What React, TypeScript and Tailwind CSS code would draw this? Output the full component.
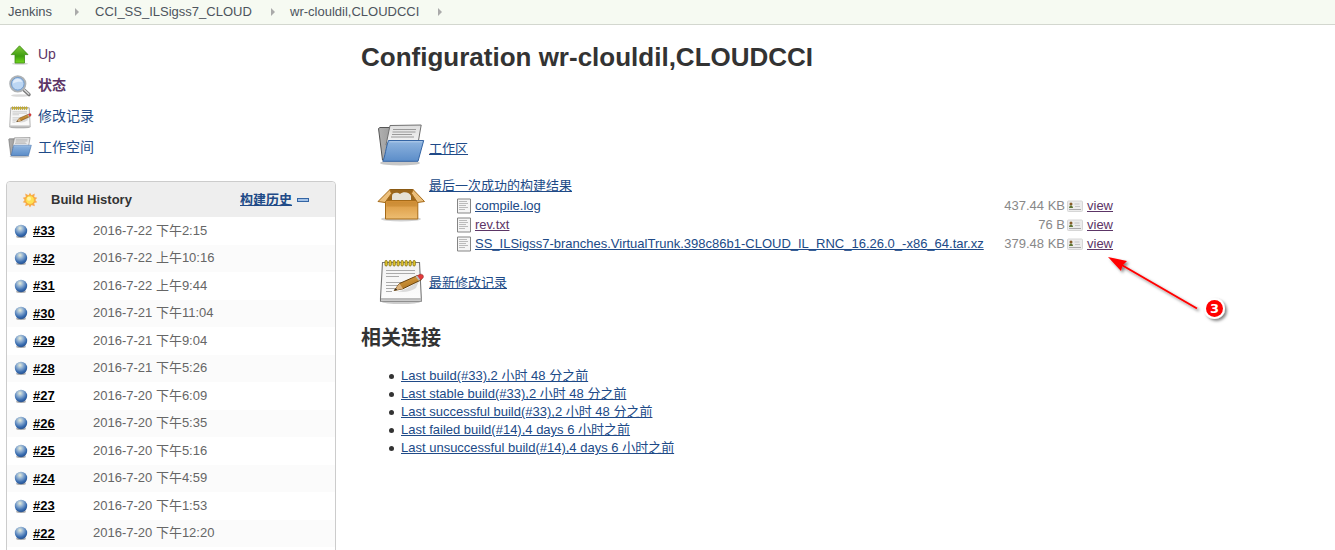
import React from "react";

const UpIcon = () => (
  <svg width="24" height="24" viewBox="0 0 24 24">
    <defs>
      <linearGradient id="up" x1="0" y1="0" x2="0" y2="1">
        <stop offset="0" stopColor="#7fc83a" />
        <stop offset=".6" stopColor="#3f9e10" />
        <stop offset="1" stopColor="#72d81e" />
      </linearGradient>
    </defs>
    <ellipse cx="12" cy="20.8" rx="8" ry="1" fill="#000" opacity=".18" />
    <path d="M11.5 2.8 20 11.6h-3.5v8.4h-9.500v-8.4H3.200z" fill="url(#up)" stroke="#3c8a12" strokeWidth=".8" />
  </svg>
);

const SearchIcon = () => (
  <svg width="24" height="24" viewBox="0 0 24 24">
    <ellipse cx="12" cy="21.500" rx="9" ry="1.300" fill="#000" opacity=".15" />
    <path d="M15.500 15.500 21 20.600" stroke="#777" strokeWidth="3.400" strokeLinecap="round" />
    <path d="M16 15.600 20.800 20.100" stroke="#d8d8d8" strokeWidth="1.400" strokeLinecap="round" />
    <circle cx="9.800" cy="9.800" r="7.600" fill="#bcd6f3" stroke="#aeb2b5" strokeWidth="2" />
    <circle cx="9.800" cy="9.800" r="6.300" fill="none" stroke="#5a8ac4" strokeWidth=".8" />
    <path d="M5 9.500c0-6 8-6 9.200-1.500C11 7.500 8 8 5 9.500z" fill="#fff" opacity=".55" />
  </svg>
);

const NotepadIcon = ({ size }: { size: number }) => (
  <svg width={size} height={size} viewBox="0 0 48 48" className="shrink-0">
    <defs>
      <linearGradient id="paper" x1="0" y1="0" x2="0" y2="1">
        <stop offset="0" stopColor="#f2f2f2" />
        <stop offset="1" stopColor="#fcfcfc" />
      </linearGradient>
      <linearGradient id="pencil" x1="0" y1="0" x2=".5" y2="1">
        <stop offset="0" stopColor="#e9ad4e" />
        <stop offset="1" stopColor="#a8701d" />
      </linearGradient>
    </defs>
    <ellipse cx="24" cy="45" rx="19" ry="2" fill="#000" opacity=".2" />
    <path d="M5.500 5.500h37l1.800 35.500v3.200H3.500V41z" fill="url(#paper)" stroke="#777" strokeWidth="1.100" />
    <path d="M4 41h40.200v2.600H4z" fill="#bbb" />
    <path d="M9 13.500h29M9 16.500h29M9 19.500h13M9 25.500h20M9 28.500h18M9 31.500h10M9 34.500h6" stroke="#aaa" />
    <g fill="#f1d32c" stroke="#85731b" strokeWidth=".9">
      {[8, 12, 16, 20, 24, 28, 32, 36].map((x) => (
        <rect key={x} x={x} y="3.500" width="2.300" height="5.500" rx="1.100" />
      ))}
    </g>
    <path d="M19 34c5 1 12-3 23-10l-3 7c-6 4-13 5-20 3z" fill="#000" opacity=".12" />
    <path d="m17.200 33.500 5.300-7 18-8 3.800 4.300-18.500 9z" fill="url(#pencil)" stroke="#68420c" />
    <path d="m17.200 33.500 5.300-7 3.500 5.300z" fill="#dcb27c" />
    <path d="m17.200 33.500 1.700-2.300 1.300 1.500z" fill="#222" />
    <path d="m39.500 19 3.800-1.700c3-.6 4.200 3 1.800 4.500L43 23z" fill="#e33a3a" stroke="#8d2b2b" strokeWidth=".6" />
    <path d="m38.500 19.400 1.700-.8 3.200 4.400-1.700.8z" fill="#bbb" />
  </svg>
);

const FolderIcon = ({ size }: { size: number }) => (
  <svg width={size} height={size} viewBox="0 0 48 48" className="shrink-0">
    <defs>
      <linearGradient id="front" x1="0" y1="0" x2="0" y2="1">
        <stop offset="0" stopColor="#90b5df" />
        <stop offset="1" stopColor="#5b8dc9" />
      </linearGradient>
      <linearGradient id="back" x1="0" y1="0" x2="1" y2="0">
        <stop offset="0" stopColor="#b0b0b0" />
        <stop offset="1" stopColor="#777" />
      </linearGradient>
      <linearGradient id="sheet" x1="0" y1="0" x2="0" y2="1">
        <stop offset="0" stopColor="#dedede" />
        <stop offset="1" stopColor="#f6f6f6" />
      </linearGradient>
    </defs>
    <ellipse cx="23" cy="41" rx="20" ry="2.500" fill="#000" opacity=".22" />
    <path d="M1.500 6.500 3 5.500h10l3 3h22L36 38H5.500z" fill="url(#back)" stroke="#555" />
    <path d="m13 3.500 31.200-.5-3.500 20H9z" fill="url(#sheet)" stroke="#707070" />
    <path d="M16 7.500h23M15.500 10h23M15 12.500h20M14 15h23" stroke="#9a9a9a" />
    <path d="M11.500 18.500h35.200L41 39.300H5.800C8 35 9 25 11.500 18.500z" fill="url(#front)" stroke="#3565a4" />
    <path d="M12.500 19.800h32.700" stroke="#c0d6f0" opacity=".7" />
  </svg>
);

const BoxIcon = () => (
  <svg width="48" height="48" viewBox="0 0 48 48" className="shrink-0">
    <defs>
      <linearGradient id="box" x1="0" y1="0" x2="0" y2="1">
        <stop offset="0" stopColor="#d9953a" />
        <stop offset="1" stopColor="#edbd72" />
      </linearGradient>
    </defs>
    <ellipse cx="24" cy="40" rx="20" ry="2.500" fill="#000" opacity=".18" />
    <path d="M13 10.500h23l5 11.500H8z" fill="#9a661d" stroke="#8a5a14" />
    <path d="M15 17c0-4 6-4 8-2 3-3 10-2 11 2v4H15z" fill="#e6e2d8" />
    <path d="M8.500 21.500h32.300v18.500H8.500z" fill="url(#box)" stroke="#a56a18" />
    <path d="M9.500 22.500h30.300v5H9.500z" fill="#b97a26" opacity=".4" />
    <path d="m13 10.500-12 12 7 1 6.500-9z" fill="#ecbf7b" stroke="#a56a18" />
    <path d="m36 10.500 11.500 12-7 1-6-9z" fill="#ecbf7b" stroke="#a56a18" />
  </svg>
);

const SunIcon = () => (
  <svg width="16" height="16" viewBox="0 0 16 16">
    <path d="m8 .8 1.500 2.500 3.300-1.700-.6 3.300 3 .8L13.300 8l1.900 2.300-3 .8.600 3.200-3.300-1.400L8 15.500l-1.500-2.600-3.300 1.400.6-3.200-3-.8L2.700 8 .8 5.700l3-.8-.6-3.300 3.300 1.700z" fill="#f9a94b" />
    <circle cx="8" cy="8" r="4.400" fill="#ffe254" stroke="#f3b33c" strokeWidth=".8" />
    <circle cx="7" cy="6.800" r="2" fill="#fff5a8" />
  </svg>
);

const Ball = () => (
  <svg width="16" height="16" viewBox="0 0 16 16" className="shrink-0">
    <defs>
      <radialGradient id="ball" cx=".42" cy=".28" r=".7">
        <stop offset="0" stopColor="#e8edda" />
        <stop offset=".4" stopColor="#8aabd0" />
        <stop offset=".8" stopColor="#3569ad" />
        <stop offset="1" stopColor="#2c5694" />
      </radialGradient>
    </defs>
    <ellipse cx="8" cy="13.800" rx="5" ry="1.200" fill="#000" opacity=".3" />
    <circle cx="8" cy="8" r="6.200" fill="url(#ball)" />
  </svg>
);

const FileIcon = () => (
  <svg width="16" height="16" viewBox="0 0 16 16" className="shrink-0">
    <path d="M1.500 1h13v14h-13z" fill="#f5f5f5" stroke="#858585" />
    <path d="M3 3.500h8M3 5.500h9M3 7.500h7M3 9.500h9M3 11.500h6" stroke="#bbb" />
  </svg>
);

const CardIcon = () => (
  <svg width="16" height="16" viewBox="0 0 16 16" className="shrink-0">
    <rect x=".5" y="3" width="15" height="10.500" rx="1" fill="#ececec" stroke="#d6d6d6" />
    <circle cx="4" cy="6" r="1.500" fill="#865c28" />
    <path d="M2 10c0-3.500 4-3.500 4 0z" fill="#5f7634" />
    <path d="M7.500 6h5M8 8.500h5" stroke="#c5c5c5" />
    <path d="M2 11.500h12" stroke="#aaa" />
  </svg>
);

const Crumb = ({ text, className }: { text: string; className: string }) => (
  <span className={`flex items-center ${className}`}>
    <span className="grow">{text}</span>
    <svg width="4" height="8" viewBox="0 0 4 8">
      <path d="M0 0 4 4 0 8z" fill="#aaa" />
    </svg>
  </span>
);

const tasks = [
  { icon: <UpIcon />, text: "Up", style: "text-[#5c3566]" },
  { icon: <SearchIcon />, text: "状态", style: "text-[#5c3566] font-bold" },
  { icon: <NotepadIcon size={24} />, text: "修改记录", style: "text-[#204a87]" },
  { icon: <FolderIcon size={24} />, text: "工作空间", style: "text-[#204a87]" },
];

const builds = [
  ["#33", "2016-7-22 下午2:15"],
  ["#32", "2016-7-22 上午10:16"],
  ["#31", "2016-7-22 上午9:44"],
  ["#30", "2016-7-21 下午11:04"],
  ["#29", "2016-7-21 下午9:04"],
  ["#28", "2016-7-21 下午5:26"],
  ["#27", "2016-7-20 下午6:09"],
  ["#26", "2016-7-20 下午5:35"],
  ["#25", "2016-7-20 下午5:16"],
  ["#24", "2016-7-20 下午4:59"],
  ["#23", "2016-7-20 下午1:53"],
  ["#22", "2016-7-20 下午12:20"],
];

const files = [
  { name: "compile.log", size: "437.44 KB", style: "text-[#204a87]" },
  { name: "rev.txt", size: "76 B", style: "text-[#5c3566]" },
  { name: "SS_ILSigss7-branches.VirtualTrunk.398c86b1-CLOUD_IL_RNC_16.26.0_-x86_64.tar.xz", size: "379.48 KB", style: "text-[#204a87]" },
];

const links = [
  "Last build(#33),2 小时 48 分之前",
  "Last stable build(#33),2 小时 48 分之前",
  "Last successful build(#33),2 小时 48 分之前",
  "Last failed build(#14),4 days 6 小时之前",
  "Last unsuccessful build(#14),4 days 6 小时之前",
];

export default function App() {
  return (
    <div className="relative flex h-[550px] w-[1335px] flex-col overflow-hidden bg-white font-['Liberation_Sans','Noto_Sans_CJK_SC',sans-serif] text-[13px] text-[#333]">
      <header className="flex h-[25px] shrink-0 items-center border-b border-[#d3d7cf] bg-[#f6faf2] pl-2 text-[#4d545d]">
        <Crumb text="Jenkins" className="w-[71px]" />
        <Crumb text="CCI_SS_ILSigss7_CLOUD" className="ml-4 w-[180px]" />
        <Crumb text="wr-clouldil,CLOUDCCI" className="ml-[15px] w-[152px]" />
      </header>
      <div className="flex min-h-0 grow">
        <aside className="w-[361px] shrink-0 pt-[14px]">
          <nav className="pl-2">
            {tasks.map((t) => (
              <a key={t.text} className={`flex h-[31px] items-center gap-1.5 text-[14px] ${t.style}`}>
                {t.icon}
                <span>{t.text}</span>
              </a>
            ))}
          </nav>
          <section className="mt-[18px] ml-1.5 h-[400px] w-[330px] rounded-t border border-[#ccc]">
            <div className="flex h-[35px] items-center rounded-t bg-[#eee] pl-[15px] font-bold">
              <SunIcon />
              <span className="ml-[13px] w-[189px]">Build History</span>
              <a className="text-[#204a87] underline">构建历史</a>
              <span className="ml-[5px] h-1 w-3 border border-[#3465a4] bg-[#a5c3e8]" />
            </div>
            {builds.map(([id, date]) => (
              <div key={id} className="flex h-[27.5px] items-center pl-1.5 even:bg-white odd:bg-[#fbfbfb]">
                <Ball />
                <a className="ml-1 w-[60px] font-bold text-black underline">{id}</a>
                <span className="pb-px text-[#666]">{date}</span>
              </div>
            ))}
          </section>
        </aside>
        <main className="pt-[14px]">
          <h1 className="h-[36px] text-[26px] leading-[36px] font-bold whitespace-nowrap">Configuration wr-clouldil,CLOUDCCI</h1>
          <div className="mt-[47px] ml-4">
            <div className="flex h-[57px] gap-1">
              <FolderIcon size={48} />
              <a className="h-5 pt-[17px] leading-5 text-[#204a87] underline">工作区</a>
            </div>
            <div className="flex h-[78px] gap-1">
              <BoxIcon />
              <div className="-mt-[3px]">
                <a className="block h-5 leading-5 text-[#204a87] underline">最后一次成功的构建结果</a>
                {files.map((f) => (
                  <div key={f.name} className="flex h-[19px] items-center pl-[27px]">
                    <FileIcon />
                    <a className={`ml-[3px] w-[512px] whitespace-nowrap underline ${f.style}`}>{f.name}</a>
                    <span className="w-[80px] pr-0.5 text-right text-[#888]">{f.size}</span>
                    <CardIcon />
                    <a className="ml-1 text-[#5c3566] underline">view</a>
                  </div>
                ))}
              </div>
            </div>
            <div className="flex h-[48px] gap-1">
              <NotepadIcon size={48} />
              <a className="h-5 pt-4 leading-5 text-[#204a87] underline">最新修改记录</a>
            </div>
          </div>
          <h2 className="mt-5 h-[26px] text-[20px] leading-[26px] font-bold">相关连接</h2>
          <ul className="mt-4 pl-[28px]">
            {links.map((l) => (
              <li key={l} className="flex h-[18px] items-center whitespace-nowrap">
                <span className="mr-[7px] h-[5px] w-[5px] rounded-full bg-[#333]" />
                <a className="text-[#204a87] underline">{l}</a>
              </li>
            ))}
          </ul>
        </main>
      </div>
      <svg className="absolute top-[250px] left-[1100px]" width="135" height="80" viewBox="0 0 135 80">
        <defs>
          <filter id="sh" x="-20%" y="-20%" width="150%" height="150%">
            <feDropShadow dx="2" dy="2" stdDeviation="1.500" floodOpacity=".5" />
          </filter>
        </defs>
        <g filter="url(#sh)">
          <path d="M20 14 97 58.500" stroke="#f00" strokeWidth="2" />
          <path d="M8 7 27 11 22.500 15.500 21 21z" fill="#f00" />
          <circle cx="114.500" cy="58.500" r="10.500" fill="#fff" />
        </g>
        <circle cx="114.500" cy="58.500" r="8.500" fill="#f00" />
        <text x="114.500" y="63" textAnchor="middle" fill="#fff" fontSize="13" className="font-['DejaVu_Sans',sans-serif] font-bold">3</text>
      </svg>
    </div>
  );
}
